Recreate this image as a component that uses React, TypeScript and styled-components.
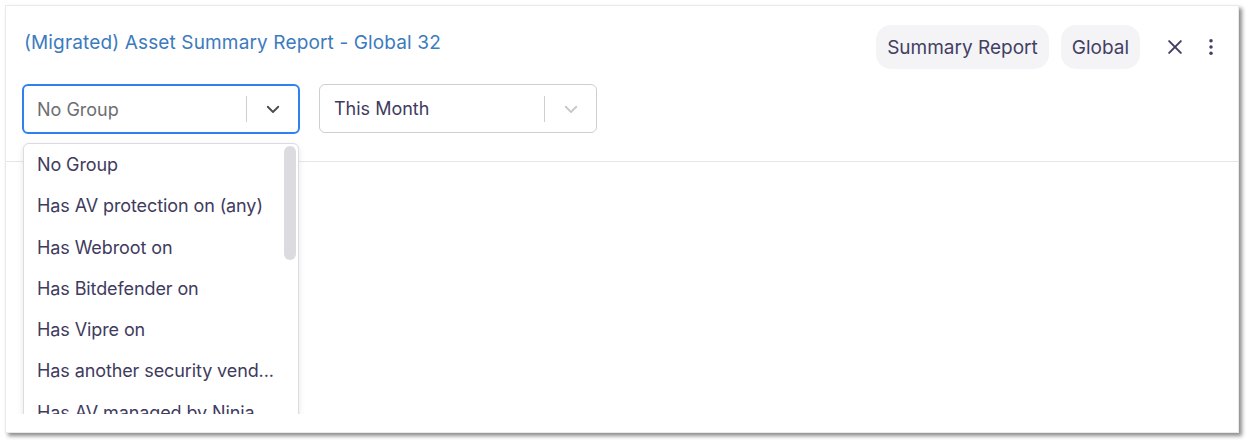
import * as React from "react"
import styled, { createGlobalStyle } from "styled-components"

const GlobalStyle = createGlobalStyle`
  html, body {
    margin: 0;
    padding: 0;
    background: #ffffff;
    font-family: Inter, "Noto Sans", sans-serif;
  }
`

const Frame = styled.div`
  padding: 5px 9px 9px 5px;
`

const Card = styled.div`
  position: relative;
  height: 428px;
  box-sizing: border-box;
  background: #fff;
  border: 1px solid #e9e9ec;
  box-shadow: 3px 3px 4px rgba(0, 0, 0, 0.45);
  overflow: hidden;
`

const Header = styled.div`
  display: flex;
  justify-content: space-between;
  align-items: flex-start;
  padding: 19px 15px 0 18px;
`

const Title = styled.h1`
  margin: 6px 0 0;
  font-size: 19px;
  font-weight: 400;
  letter-spacing: 0.14px;
  color: #3c7bbd;
`

const Actions = styled.div`
  display: flex;
  align-items: center;
  gap: 12px;
`

const Pill = styled.span`
  display: inline-flex;
  align-items: center;
  height: 44px;
  padding: 0 11px;
  border-radius: 15px;
  background: #f4f4f6;
  color: #433f63;
  font-size: 19px;
`

const IconButton = styled.button<{ $ml?: number }>`
  display: inline-flex;
  align-items: center;
  justify-content: center;
  width: 24px;
  height: 24px;
  padding: 0;
  margin-left: ${(p) => p.$ml ?? 0}px;
  border: none;
  background: none;
  color: #433f63;
`

const Filters = styled.div`
  display: flex;
  gap: 19px;
  padding: 15px 0 0 16px;
`

const SelectBox = styled.div<{ $focused?: boolean }>`
  display: flex;
  align-items: center;
  box-sizing: border-box;
  width: 278px;
  height: ${(p) => (p.$focused ? 50 : 49)}px;
  border: ${(p) => (p.$focused ? "2px solid #2f81f2" : "1px solid #cfcfd3")};
  border-radius: 6px;
  padding-left: ${(p) => (p.$focused ? 13 : 14)}px;
  background: #fff;
`

const SelectValue = styled.span<{ $placeholder?: boolean }>`
  flex: 1;
  font-size: 18px;
  color: ${(p) => (p.$placeholder ? "#6e6e72" : "#3f3b5e")};
`

const Sep = styled.span`
  width: 1px;
  height: 26px;
  background: #cfcfd3;
`

const Chevron = styled.span<{ $muted?: boolean }>`
  display: flex;
  align-items: center;
  justify-content: center;
  width: 51px;
  color: ${(p) => (p.$muted ? "#c8c8cc" : "#4a4a50")};
`

const Divider = styled.div`
  margin-top: 27px;
  height: 1px;
  background: #e6e6e9;
`

const Clip = styled.div`
  position: absolute;
  left: 0;
  right: 0;
  top: 0;
  height: 408px;
  overflow: hidden;
`

const Menu = styled.div`
  position: absolute;
  left: 17px;
  top: 137px;
  width: 276px;
  height: 310px;
  box-sizing: border-box;
  border: 1px solid #dcdce0;
  border-radius: 6px;
  background: #fff;
  box-shadow: 0 2px 6px rgba(0, 0, 0, 0.1);
`

const Option = styled.div`
  height: 41.25px;
  display: flex;
  align-items: center;
  padding-left: 13px;
  font-size: 18px;
  letter-spacing: -0.1px;
  color: #3f3b5e;
  white-space: nowrap;
`

const Thumb = styled.div`
  position: absolute;
  right: 2px;
  top: 2px;
  width: 12px;
  height: 114px;
  border-radius: 6px;
  background: #dcdce0;
`

const ChevronSvg = () => (
  <svg width="18" height="18" viewBox="0 0 24 24" fill="none" stroke="currentColor" strokeWidth="2.4" strokeLinecap="round" strokeLinejoin="round">
    <polyline points="5 9 12 16 19 9" />
  </svg>
)

const options = [
  "No Group",
  "Has AV protection on (any)",
  "Has Webroot on",
  "Has Bitdefender on",
  "Has Vipre on",
  "Has another security vend...",
  "Has AV managed by Ninja",
]

export default function App() {
  return (
    <Frame>
      <GlobalStyle />
      <Card>
        <Header>
          <Title>(Migrated) Asset Summary Report - Global 32</Title>
          <Actions>
            <Pill>Summary Report</Pill>
            <Pill>Global</Pill>
            <IconButton $ml={11}>
              <svg width="20" height="20" viewBox="0 0 24 24" fill="none" stroke="currentColor" strokeWidth="2.4" strokeLinecap="round">
                <line x1="5" y1="5" x2="19" y2="19" />
                <line x1="19" y1="5" x2="5" y2="19" />
              </svg>
            </IconButton>
            <IconButton>
              <svg width="20" height="20" viewBox="0 0 24 24" fill="currentColor">
                <circle cx="12" cy="4.5" r="2.1" />
                <circle cx="12" cy="12" r="2.1" />
                <circle cx="12" cy="19.5" r="2.1" />
              </svg>
            </IconButton>
          </Actions>
        </Header>
        <Filters>
          <SelectBox $focused>
            <SelectValue $placeholder>No Group</SelectValue>
            <Sep />
            <Chevron><ChevronSvg /></Chevron>
          </SelectBox>
          <SelectBox>
            <SelectValue>This Month</SelectValue>
            <Sep />
            <Chevron $muted><ChevronSvg /></Chevron>
          </SelectBox>
        </Filters>
        <Divider />
        <Clip>
          <Menu>
            {options.map((o) => (
              <Option key={o}>{o}</Option>
            ))}
            <Thumb />
          </Menu>
        </Clip>
      </Card>
    </Frame>
  )
}
